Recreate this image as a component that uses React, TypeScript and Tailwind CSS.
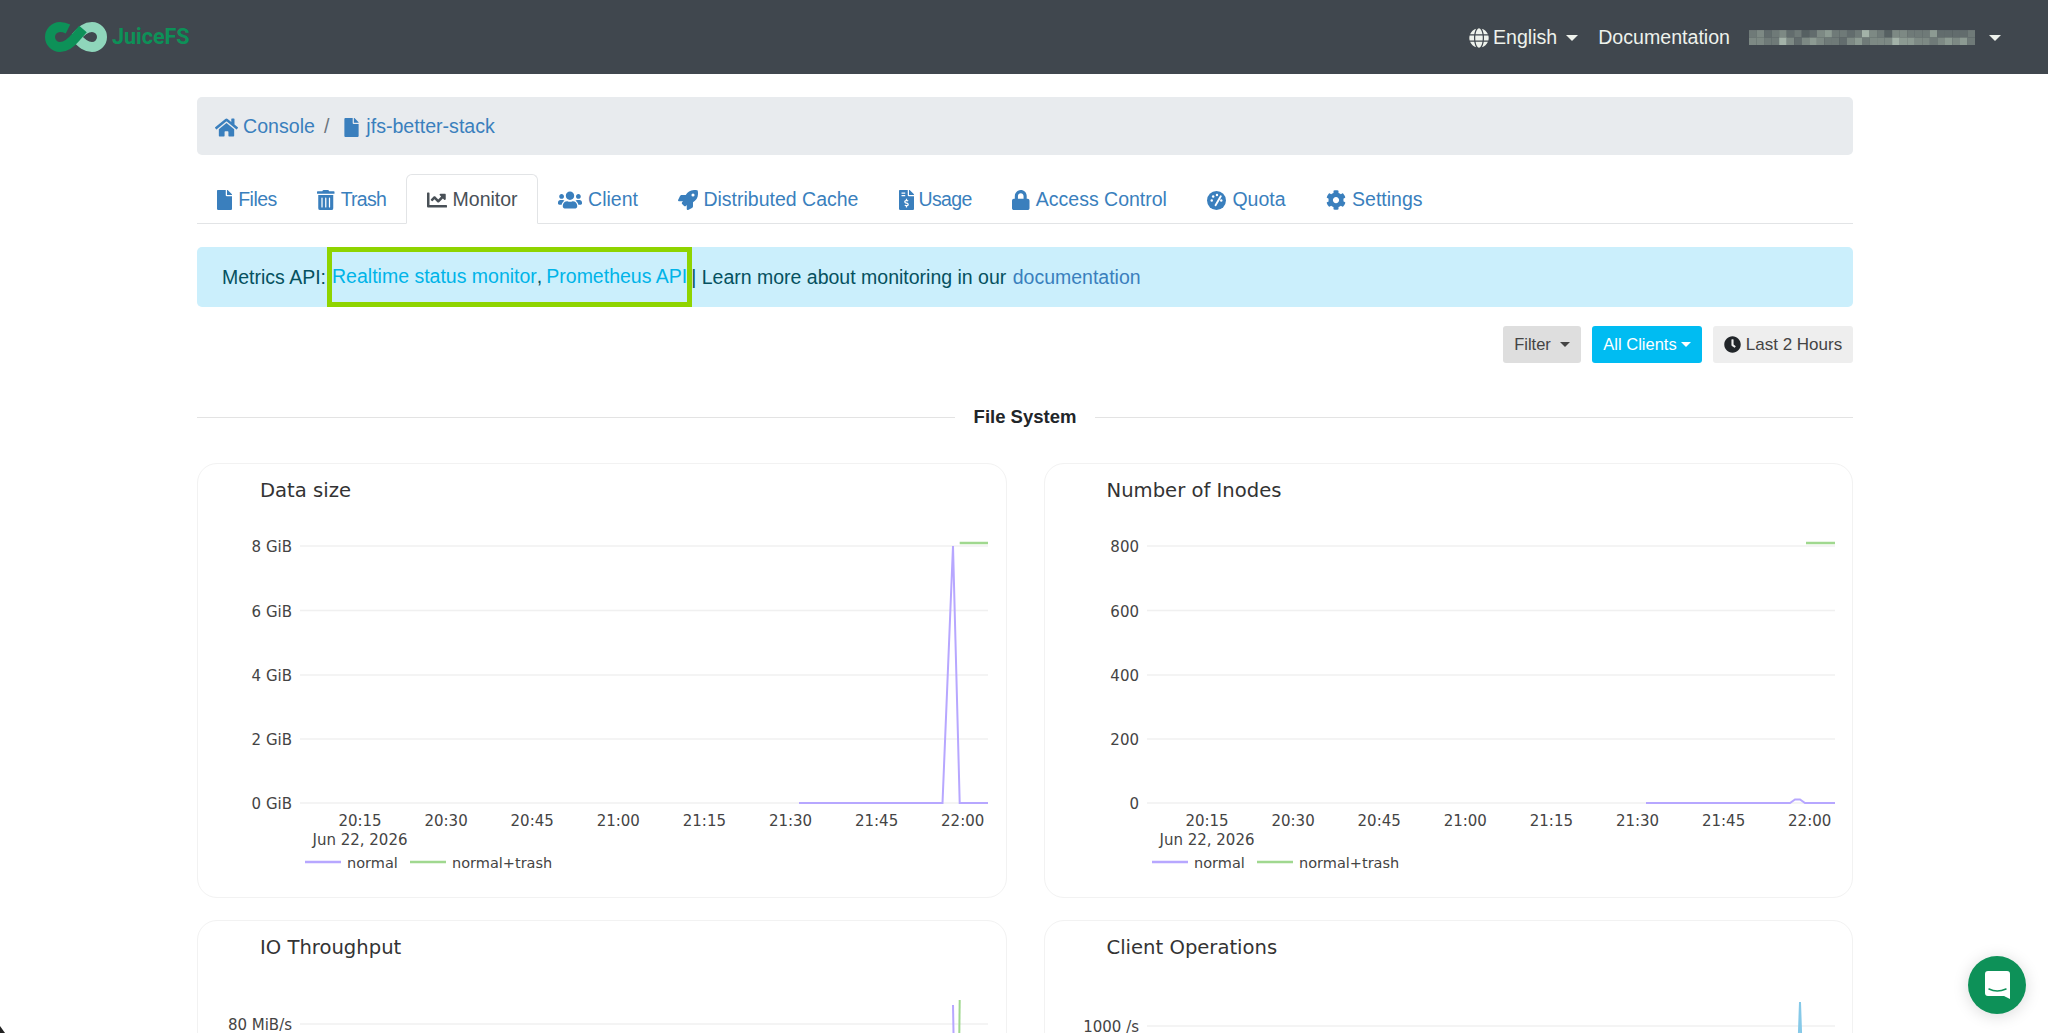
import type { ReactNode } from 'react';
import { FaChartLine, FaClock, FaCog, FaFile, FaFileInvoiceDollar, FaGlobe, FaHome, FaLock, FaRocket, FaTrashAlt, FaUsers } from 'react-icons/fa';

function QuotaIcon({ className = '' }: { className?: string }) {
  return (
    <svg className={className} viewBox="0 0 20 20">
      <circle cx="10" cy="10" r="10" fill="currentColor" />
      <circle cx="5" cy="10" r="1.3" fill="#fff" />
      <circle cx="6.5" cy="5.8" r="1.3" fill="#fff" />
      <circle cx="10.5" cy="4.2" r="1.3" fill="#fff" />
      <circle cx="15" cy="10" r="1.3" fill="#fff" />
      <path d="M9 15 L14.5 5.5" stroke="#fff" strokeWidth="2" strokeLinecap="round" />
    </svg>
  );
}

const tabs: { label: string; icon: (p: { className?: string }) => ReactNode; size: string; track?: string; active?: boolean }[] = [
  { label: 'Files', icon: FaFile, size: 'h-[20px] w-[15px]', track: 'tracking-[-0.55px]' },
  { label: 'Trash', icon: FaTrashAlt, size: 'h-[20px] w-[17.5px]', track: 'tracking-[-0.75px]' },
  { label: 'Monitor', icon: FaChartLine, size: 'h-[20px] w-[20px]', active: true },
  { label: 'Client', icon: FaUsers, size: 'h-[20px] w-[24px]' },
  { label: 'Distributed Cache', icon: FaRocket, size: '-mr-px h-[20px] w-[20px]' },
  { label: 'Usage', icon: FaFileInvoiceDollar, size: '-mr-[1.5px] h-[20px] w-[15px]', track: 'tracking-[-0.6px]' },
  { label: 'Access Control', icon: FaLock, size: 'h-[20px] w-[17.5px]' },
  { label: 'Quota', icon: QuotaIcon, size: 'h-[19px] w-[19px]' },
  { label: 'Settings', icon: FaCog, size: 'h-[20px] w-[20px]' },
];

const timeTicks = ['20:15', '20:30', '20:45', '21:00', '21:15', '21:30', '21:45', '22:00'];

function Caret({ className = 'border-x-[6px] border-t-[6px]' }: { className?: string }) {
  return <span className={`inline-block h-0 w-0 border-x-transparent border-t-current ${className}`} />;
}

function Logo() {
  return (
    <svg width="62" height="30" viewBox="0 0 62 30" fill="none">
      <path d="M31 15 C37 8 41 5 47 5 C53 5 57 10 57 15 C57 20 53 25 47 25 C41 25 37 22 31 15" stroke="#8fd6bb" strokeWidth="10" />
      <path d="M23 7 C20 5.5 18 5 15 5 C9 5 5 10 5 15 C5 20 9 25 15 25 C21 25 26 21 31 15 L38 7" stroke="#0d9158" strokeWidth="10" />
    </svg>
  );
}

// pixelated account name, two rows of cells
const mosaic = [
  '5 6 4 5 6 4 5 3 4 6 7 5 5 4 5 8 6 5 3 6 6 5 5 5 7 4 4 4 4 5',
  '6 6 5 5 8 6 4 6 7 6 5 5 4 6 7 5 6 6 6 8 7 7 6 6 5 6 7 6 7 5',
];

function BlurredName() {
  const shade = ['#40474e', '#484f55', '#4f575b', '#566062', '#626c6d', '#6f7a78', '#7d8984', '#8c9a92', '#a3b2a8'];
  return (
    <svg className="blur-[0.6px]" width="226" height="15" viewBox="0 0 228 15">
      {mosaic.map((row, y) =>
        row.split(' ').map((v, x) => (
          <rect key={`${x}-${y}`} x={x * 7.6} y={y * 7.5} width="7.7" height="7.6" fill={shade[Number(v)]} />
        )),
      )}
    </svg>
  );
}

function Chart({ yLabels, kind }: { yLabels: string[]; kind: 'size' | 'inodes' }) {
  const gridY = [83, 147.5, 212, 276, 340];
  return (
    <svg className="block" width="809" height="434" viewBox="1 1 809 434" fontFamily="'DejaVu Sans', sans-serif">
      {gridY.map((y, i) => (
        <g key={y}>
          <line x1="103" x2="791" y1={y} y2={y} stroke="#f0f0f0" strokeWidth="1.5" />
          <text x="95" y={y + 6} textAnchor="end" fontSize="15" fill="#444">{yLabels[i]}</text>
        </g>
      ))}
      {timeTicks.map((t, i) => (
        <text key={t} x={163 + i * 86.1} y="363" textAnchor="middle" fontSize="15" fill="#444">{t}</text>
      ))}
      <text x="163" y="382" textAnchor="middle" fontSize="15" fill="#444">Jun 22, 2026</text>
      {kind === 'size' ? (
        <polyline points="602,340 745.5,340 756,83 762.7,340 791,340" fill="none" stroke="#b7a7ff" strokeWidth="2" />
      ) : (
        <polyline points="602,340 746,340 751,336.5 756,336.5 761,340 791,340" fill="none" stroke="#b7a7ff" strokeWidth="2" />
      )}
      <line x1={kind === 'size' ? 762.7 : 762} x2="791" y1="80" y2="80" stroke="#a0d88f" strokeWidth="2.5" />
      <line x1="108" x2="144" y1="399" y2="399" stroke="#b7a7ff" strokeWidth="2.5" />
      <text x="150" y="405" fontSize="14.5" fill="#444">normal</text>
      <line x1="213" x2="249" y1="399" y2="399" stroke="#a0d88f" strokeWidth="2.5" />
      <text x="255" y="405" fontSize="14.5" fill="#444">normal+trash</text>
    </svg>
  );
}

function Card({ title, children }: { title: string; children: ReactNode }) {
  return (
    <div className="relative h-[435px] rounded-[20px] border border-[#f2f2f2] bg-white">
      <div className="absolute top-[12px] left-[62px] font-['DejaVu_Sans',sans-serif] text-[19.6px] text-[#333]">{title}</div>
      {children}
    </div>
  );
}

export default function App() {
  return (
    <div className="relative h-[1033px] overflow-hidden bg-white font-['Liberation_Sans',sans-serif] text-[19px] text-[#212529]">
      <nav className="flex h-[74px] items-center justify-between bg-[#40474e] pr-[47px] pl-[45px]">
        <div className="flex items-center gap-[5px]">
          <Logo />
          <span className="font-['Roboto',sans-serif] text-[21.5px] font-bold text-[#0d9158]">JuiceFS</span>
        </div>
        <div className="flex items-center pt-[2px] text-[19.6px] text-[#eef2ec]">
          <FaGlobe className="mr-[4px] text-[20px]" />
          <span>English</span>
          <Caret className="ml-[9px] border-x-[6px] border-t-[6px]" />
          <span className="ml-[20px]">Documentation</span>
          <span className="ml-[19px] flex"><BlurredName /></span>
          <Caret className="ml-[14px] border-x-[6px] border-t-[6px]" />
        </div>
      </nav>

      <main className="mx-[197px] w-[1656px]">
        <div className="mt-[23px] flex h-[58px] items-center rounded-[5px] bg-[#e8ebee] pt-[2px] pl-[18px] text-[19.6px] text-[#3a7fbd]">
          <FaHome className="mr-[5px] text-[23px]" />
          <span>Console</span>
          <span className="mx-[9px] text-[#6c757d]">/</span>
          <FaFile className="mr-[5px] ml-[4px] text-[19px]" />
          <span>jfs-better-stack</span>
        </div>

        <div className="mt-[19px] flex h-[50px] border-b border-[#e2e4e6] text-[19.5px] text-[#3a7fbd]">
          {tabs.map(({ label, icon: Icon, size, track, active }) => (
            <div
              key={label}
              className={`-mb-px flex items-center gap-[6px] rounded-t-[6px] border px-[19.25px] pt-[2px] ${active ? 'border-[#e2e4e6] border-b-white bg-white text-[#495057]' : 'border-transparent'}`}
            >
              <Icon className={size} />
              <span className={track}>{label}</span>
            </div>
          ))}
        </div>

        <div className="mt-[23px] flex h-[60px] items-center rounded-[5px] bg-[#cbeffc] pt-px pl-[25px] text-[19.5px] text-[#055160]">
          <span className="mr-px">Metrics API:</span>
          <span className="-mt-px flex items-center self-stretch border-[5px] border-[#8fd400] text-[#00b4e8]">
            Realtime status monitor<span className="mr-[4px] text-[#055160]">,</span>Prometheus API
          </span>
          <span className="-ml-px">| Learn more about monitoring in our&nbsp;</span>
          <span className="ml-px text-[#3a7fbd]">documentation</span>
        </div>

        <div className="mt-[19px] flex justify-end gap-[11px] text-[16.5px]">
          <div className="flex h-[37px] w-[78px] items-center justify-center gap-[9px] rounded-[3px] bg-[#dedede] text-[#444]">
            Filter <Caret className="border-x-[5px] border-t-[5px]" />
          </div>
          <div className="flex h-[37px] w-[110px] items-center justify-center gap-[4px] rounded-[3px] bg-[#00bcf2] text-white">
            All Clients <Caret className="border-x-[5px] border-t-[5px]" />
          </div>
          <div className="flex h-[37px] w-[140px] items-center justify-center gap-[5px] rounded-[3px] bg-[#eeeeee] text-[17px] text-[#444]">
            <FaClock className="text-[17px] text-[#212529]" /> Last 2 Hours
          </div>
        </div>

        <div className="mt-[43px] flex h-[22px] items-center gap-[19px] text-[18.5px] font-semibold">
          <div className="h-px flex-1 bg-[#e3e3e3]" />
          <span>File System</span>
          <div className="h-px flex-1 bg-[#e3e3e3]" />
        </div>

        <div className="mt-[35px] grid grid-cols-2 gap-x-[37px] gap-y-[22px]">
          <Card title="Data size">
            <Chart kind="size" yLabels={['8 GiB', '6 GiB', '4 GiB', '2 GiB', '0 GiB']} />
          </Card>
          <Card title="Number of Inodes">
            <Chart kind="inodes" yLabels={['800', '600', '400', '200', '0']} />
          </Card>
          <Card title="IO Throughput">
            <svg className="block" width="809" height="434" viewBox="1 1 809 434" fontFamily="'DejaVu Sans', sans-serif">
              <line x1="103" x2="791" y1="104" y2="104" stroke="#f0f0f0" strokeWidth="1.5" />
              <text x="95" y="110" textAnchor="end" fontSize="15" fill="#444">80 MiB/s</text>
              <polyline points="756,85 757,140" fill="none" stroke="#b7a7ff" strokeWidth="2" />
              <polyline points="762.7,80 762,140" fill="none" stroke="#a0d88f" strokeWidth="2" />
            </svg>
          </Card>
          <Card title="Client Operations">
            <svg className="block" width="809" height="434" viewBox="1 1 809 434" fontFamily="'DejaVu Sans', sans-serif">
              <line x1="103" x2="791" y1="106" y2="106" stroke="#f0f0f0" strokeWidth="1.5" />
              <text x="95" y="112" textAnchor="end" fontSize="15" fill="#444">1000 /s</text>
              <polyline points="754,140 756,82 758,140" fill="none" stroke="#86c9e8" strokeWidth="2" />
            </svg>
          </Card>
        </div>
      </main>

      <div className="absolute right-[22px] bottom-[19px] flex h-[58px] w-[58px] items-center justify-center rounded-full bg-[#0d9158] shadow-[0_2px_16px_rgba(0,0,0,0.15)]">
        <svg width="25" height="28" viewBox="0 0 25 28">
          <path d="M3 0 H22 Q25 0 25 3 V28 L19 25 H3 Q0 25 0 22 V3 Q0 0 3 0 Z" fill="#fff" />
          <path d="M4 18 Q12 22 21 18" fill="none" stroke="#0d9158" strokeWidth="1.5" strokeLinecap="round" />
        </svg>
      </div>

      {/* window corner */}
      <svg className="absolute bottom-0 left-0" width="5" height="7" viewBox="0 0 5 7">
        <path d="M0 0 L5 7 H0 Z" fill="#222" />
      </svg>
    </div>
  );
}
